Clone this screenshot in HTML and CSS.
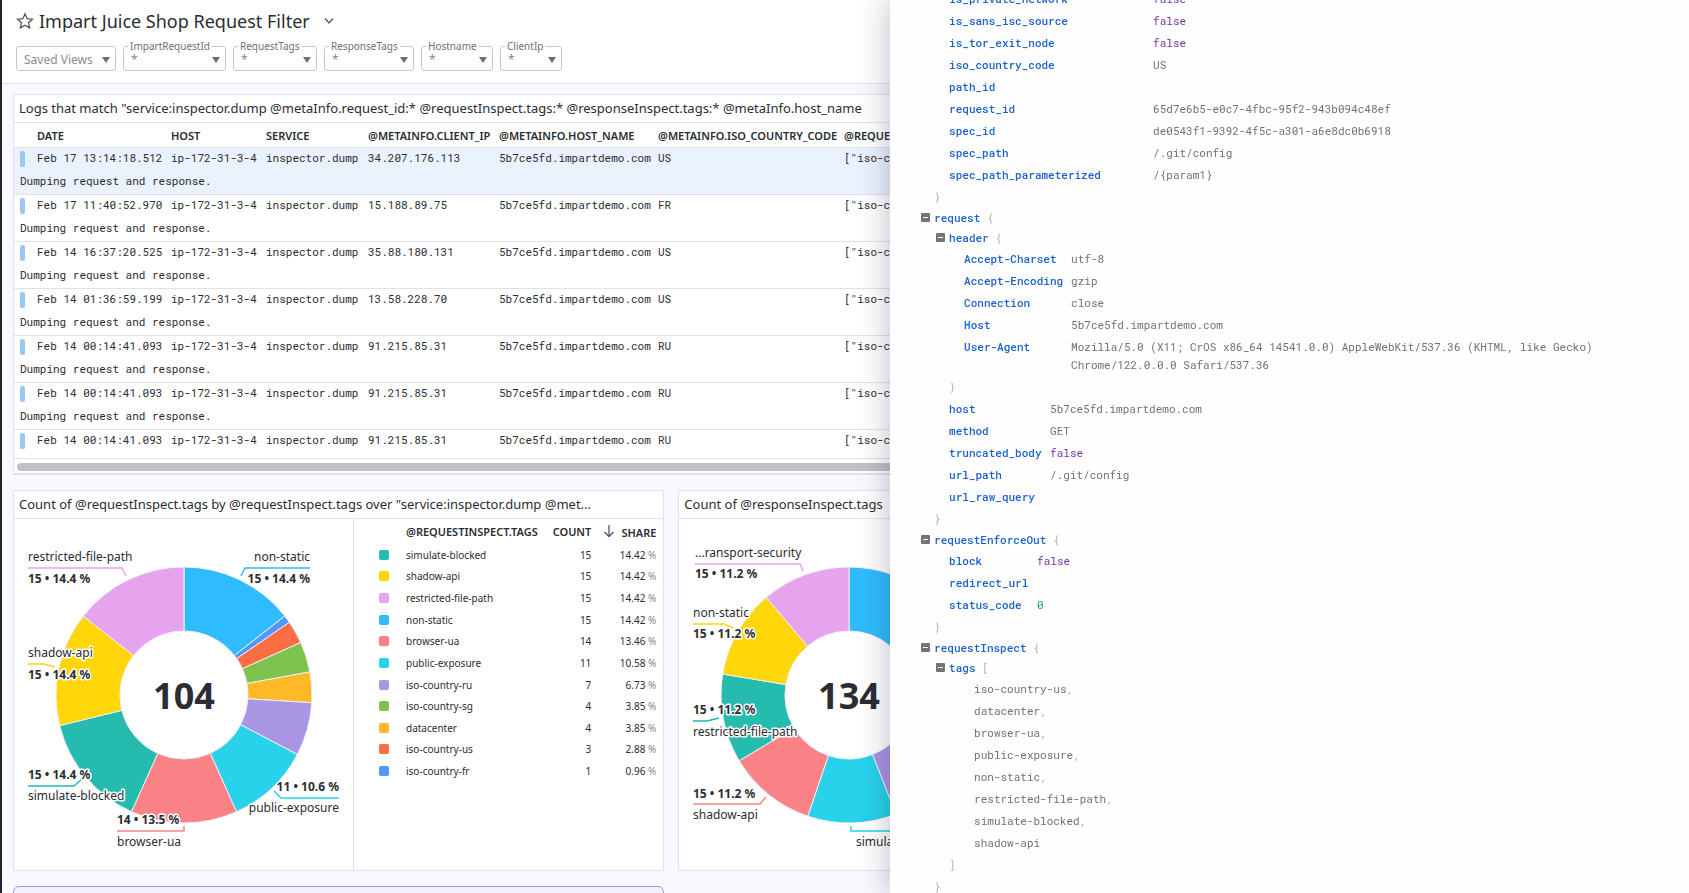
FILE: index.html
```html
<!DOCTYPE html>
<html lang="en">
<head>
  <meta charset="UTF-8">
  <title>Impart Juice Shop Request Filter</title>
  <link rel="stylesheet" href="styles.css">
</head>
<body>
  <div class="dashboard">
    <header class="topbar">
      <div class="title-row">
        <svg class="star" width="18" height="18" viewBox="0 0 18 18"><path d="M9 1.8l2.1 4.9 5.3.5-4 3.5 1.2 5.2L9 13.2l-4.6 2.7 1.2-5.2-4-3.5 5.3-.5z"/></svg>
        <h1>Impart Juice Shop Request Filter</h1>
        <svg class="chevron" width="10" height="8" viewBox="0 0 10 8"><path d="M1 1.5l4 4.5 4-4.5"/></svg>
      </div>
      <div class="filters">
        <div class="filter saved"><select aria-label="Saved Views"><option>Saved Views</option></select></div>
        <div class="filter request-id"><label for="f1">ImpartRequestId</label><select id="f1"><option>*</option></select></div>
        <div class="filter request-tags"><label for="f2">RequestTags</label><select id="f2"><option>*</option></select></div>
        <div class="filter response-tags"><label for="f3">ResponseTags</label><select id="f3"><option>*</option></select></div>
        <div class="filter hostname"><label for="f4">Hostname</label><select id="f4"><option>*</option></select></div>
        <div class="filter client-ip"><label for="f5">ClientIp</label><select id="f5"><option>*</option></select></div>
      </div>
    </header>

    <main class="board">
      <section class="widget logs">
        <h2>Logs that match "service:inspector.dump @metaInfo.request_id:* @requestInspect.tags:* @responseInspect.tags:* @metaInfo.host_name</h2>
        <div class="log-scroll">
          <table class="log-table">
            <colgroup><col class="c-bar"><col class="c-date"><col class="c-host"><col class="c-service"><col class="c-ip"><col class="c-name"><col class="c-iso"><col></colgroup>
            <thead>
              <tr><th></th><th>DATE</th><th>HOST</th><th>SERVICE</th><th>@METAINFO.CLIENT_IP</th><th>@METAINFO.HOST_NAME</th><th>@METAINFO.ISO_COUNTRY_CODE</th><th>@REQUESTINSPECT.TAGS</th></tr>
            </thead>
            <tbody id="logs"></tbody>
          </table>
        </div>
        <div class="scrollbar"><div class="thumb"></div></div>
      </section>

      <section class="widget">
        <h2>Count of @requestInspect.tags by @requestInspect.tags over "service:inspector.dump @met...</h2>
        <div class="pie">
          <svg class="donut" id="donut-request" width="339" height="351" viewBox="0 0 339 351"></svg>
          <div class="legend">
            <table>
              <thead>
                <tr>
                  <th class="swatch-cell"></th><th>@REQUESTINSPECT.TAGS</th><th class="num">COUNT</th>
                  <th class="num"><svg width="12" height="14" viewBox="0 0 12 14"><path d="M6 1v11M1.500 8L6 12.500 10.500 8"/></svg>SHARE</th>
                </tr>
              </thead>
              <tbody id="legend"></tbody>
            </table>
          </div>
        </div>
      </section>

      <section class="widget">
        <h2>Count of @responseInspect.tags</h2>
        <div class="pie">
          <svg class="donut" id="donut-response" width="339" height="351" viewBox="0 0 339 351"></svg>
        </div>
      </section>

      <section class="group"></section>
    </main>
  </div>

  <aside class="drawer">
    <div class="tree">
      <div class="level">
        <dl class="kv meta">
          <dt>is_private_network</dt><dd class="bool">false</dd>
          <dt>is_sans_isc_source</dt><dd class="bool">false</dd>
          <dt>is_tor_exit_node</dt><dd class="bool">false</dd>
          <dt>iso_country_code</dt><dd>US</dd>
          <dt>path_id</dt><dd></dd>
          <dt>request_id</dt><dd>65d7e6b5-e0c7-4fbc-95f2-943b094c48ef</dd>
          <dt>spec_id</dt><dd>de0543f1-9392-4f5c-a301-a6e8dc0b6918</dd>
          <dt>spec_path</dt><dd>/.git/config</dd>
          <dt>spec_path_parameterized</dt><dd>/{param1}</dd>
        </dl>
      </div>
      <div class="close">}</div>

      <div class="head"><button class="toggle" aria-label="Collapse request"></button><span class="key">request</span> {</div>
      <div class="level">
        <div class="head"><button class="toggle" aria-label="Collapse header"></button><span class="key">header</span> {</div>
        <div class="level">
          <dl class="kv header">
            <dt>Accept-Charset</dt><dd>utf-8</dd>
            <dt>Accept-Encoding</dt><dd>gzip</dd>
            <dt>Connection</dt><dd>close</dd>
            <dt>Host</dt><dd>5b7ce5fd.impartdemo.com</dd>
            <dt>User-Agent</dt><dd>Mozilla/5.0 (X11; CrOS x86_64 14541.0.0) AppleWebKit/537.36 (KHTML, like Gecko) Chrome/122.0.0.0 Safari/537.36</dd>
          </dl>
        </div>
        <div class="close">}</div>
        <dl class="kv request">
          <dt>host</dt><dd>5b7ce5fd.impartdemo.com</dd>
          <dt>method</dt><dd>GET</dd>
          <dt>truncated_body</dt><dd class="bool">false</dd>
          <dt>url_path</dt><dd>/.git/config</dd>
          <dt>url_raw_query</dt><dd></dd>
        </dl>
      </div>
      <div class="close">}</div>

      <div class="head"><button class="toggle" aria-label="Collapse requestEnforceOut"></button><span class="key">requestEnforceOut</span> {</div>
      <div class="level">
        <dl class="kv enforce">
          <dt>block</dt><dd class="bool">false</dd>
          <dt>redirect_url</dt><dd></dd>
          <dt>status_code</dt><dd class="number">0</dd>
        </dl>
      </div>
      <div class="close">}</div>

      <div class="head"><button class="toggle" aria-label="Collapse requestInspect"></button><span class="key">requestInspect</span> {</div>
      <div class="level">
        <div class="head"><button class="toggle" aria-label="Collapse tags"></button><span class="key">tags</span> [</div>
        <ul>
          <li>iso-country-us<i>,</i></li>
          <li>datacenter<i>,</i></li>
          <li>browser-ua<i>,</i></li>
          <li>public-exposure<i>,</i></li>
          <li>non-static<i>,</i></li>
          <li>restricted-file-path<i>,</i></li>
          <li>simulate-blocked<i>,</i></li>
          <li>shadow-api</li>
        </ul>
        <div class="close">]</div>
      </div>
      <div class="close">}</div>
    </div>
  </aside>

  <script>
    // Log rows: date, client ip, country
    const logs = [
      ["Feb 17 13:14:18.512", "34.207.176.113", "US"],
      ["Feb 17 11:40:52.970", "15.188.89.75", "FR"],
      ["Feb 14 16:37:20.525", "35.88.180.131", "US"],
      ["Feb 14 01:36:59.199", "13.58.228.70", "US"],
      ["Feb 14 00:14:41.093", "91.215.85.31", "RU"],
      ["Feb 14 00:14:41.093", "91.215.85.31", "RU"],
      ["Feb 14 00:14:41.093", "91.215.85.31", "RU"]
    ];
    document.getElementById("logs").innerHTML = logs.map(([date, ip, country], i) => `
      <tr class="entry${i === 0 ? " active" : ""}">
        <td><span class="bar"></span></td><td>${date}</td><td>ip-172-31-3-4</td><td>inspector.dump</td>
        <td>${ip}</td><td>5b7ce5fd.impartdemo.com</td><td>${country}</td><td>["iso-country-${country.toLowerCase()}"]</td>
      </tr>
      <tr class="message${i === 0 ? " active" : ""}"><td colspan="8">Dumping request and response.</td></tr>`).join("");

    // Legend of the request tags
    const tags = [
      ["simulate-blocked", 15, "14.42", "#25bbae"],
      ["shadow-api", 15, "14.42", "#ffd60a"],
      ["restricted-file-path", 15, "14.42", "#e6a3ee"],
      ["non-static", 15, "14.42", "#2fbcff"],
      ["browser-ua", 14, "13.46", "#fb8388"],
      ["public-exposure", 11, "10.58", "#27d2ea"],
      ["iso-country-ru", 7, "6.73", "#a896e5"],
      ["iso-country-sg", 4, "3.85", "#7fc34f"],
      ["datacenter", 4, "3.85", "#ffb928"],
      ["iso-country-us", 3, "2.88", "#fb6e44"],
      ["iso-country-fr", 1, "0.96", "#5197ff"]
    ];
    document.getElementById("legend").innerHTML = tags.map(([name, count, share, color]) => `
      <tr><td class="swatch-cell"><span class="swatch" style="background:${color}"></span></td>
      <td>${name}</td><td class="num">${count}</td><td class="num">${share} <span class="unit">%</span></td></tr>`).join("");

    // Donut charts, slices run clockwise from the top
    const CX = 170, CY = 176, R = 128, INNER = 64;

    function point(r, turn) {
      const a = turn * 2 * Math.PI;
      return (CX + r * Math.sin(a)).toFixed(2) + " " + (CY - r * Math.cos(a)).toFixed(2);
    }

    function drawDonut(id, total, slices, labels) {
      let sum = 0;
      let svg = "";
      slices.forEach(([count, color]) => {
        const a = sum / total;
        sum += count;
        const b = sum / total;
        svg += `<path class="slice" fill="${color}" d="M${point(R, a)}A${R} ${R} 0 0 1 ${point(R, b)}L${point(INNER, b)}A${INNER} ${INNER} 0 0 0 ${point(INNER, a)}Z"/>`;
      });
      labels.forEach(l => {
        const anchor = l.end ? "end" : "start";
        svg += `<path class="leader" stroke="${l.color}" d="${l.line}"/>`;
        svg += `<text x="${l.x}" y="${l.nameY}" text-anchor="${anchor}">${l.name}</text>`;
        if (l.value) svg += `<text class="value" x="${l.x}" y="${l.valueY}" text-anchor="${anchor}">${l.value}</text>`;
      });
      svg += `<text class="total" x="${CX}" y="190" text-anchor="middle">${total}</text>`;
      document.getElementById(id).innerHTML = svg;
    }

    drawDonut("donut-request", 104, [
      [15, "#2fbcff"], [1, "#5197ff"], [3, "#fb6e44"], [4, "#7fc34f"], [4, "#ffb928"], [7, "#a896e5"],
      [11, "#27d2ea"], [14, "#fb8388"], [15, "#25bbae"], [15, "#ffd60a"], [15, "#e6a3ee"]
    ], [
      { name: "restricted-file-path", value: "15 • 14.4 %", x: 14, nameY: 42, valueY: 64, color: "#e6a3ee", line: "M14 49H108L112 57" },
      { name: "non-static", value: "15 • 14.4 %", x: 296, end: true, nameY: 42, valueY: 64, color: "#2fbcff", line: "M296 49H231L227 57" },
      { name: "shadow-api", value: "15 • 14.4 %", x: 14, nameY: 138, valueY: 160, color: "#ffd60a", line: "M14 145H30L41 148" },
      { name: "simulate-blocked", value: "15 • 14.4 %", x: 14, nameY: 281, valueY: 260, color: "#25bbae", line: "M14 267H60L68 260" },
      { name: "browser-ua", value: "14 • 13.5 %", x: 103, nameY: 327, valueY: 305, color: "#fb8388", line: "M103 312H170V307" },
      { name: "public-exposure", value: "11 • 10.6 %", x: 325, end: true, nameY: 293, valueY: 272, color: "#27d2ea", line: "M325 279H267L260 272" }
    ]);

    drawDonut("donut-response", 134, [
      [15, "#2fbcff"], [4, "#fb6e44"], [11, "#7fc34f"], [14, "#ffb928"], [15, "#a896e5"],
      [15, "#27d2ea"], [15, "#fb8388"], [15, "#25bbae"], [15, "#ffd60a"], [15, "#e6a3ee"]
    ], [
      { name: "...ransport-security", value: "15 • 11.2 %", x: 16, nameY: 38, valueY: 59, color: "#e6a3ee", line: "M16 45H121L124 52" },
      { name: "non-static", value: "15 • 11.2 %", x: 14, nameY: 98, valueY: 119, color: "#ffd60a", line: "M14 105H45L54 109" },
      { name: "restricted-file-path", value: "15 • 11.2 %", x: 14, nameY: 217, valueY: 195, color: "#25bbae", line: "M14 202H28L40 199" },
      { name: "shadow-api", value: "15 • 11.2 %", x: 14, nameY: 300, valueY: 279, color: "#fb8388", line: "M14 285H81L87 278" },
      { name: "simulate-blocked", x: 177, nameY: 327, color: "#27d2ea", line: "M172 307V312H270" }
    ]);
  </script>
</body>
</html>
```

FILE: styles.css
```css
* {
  box-sizing: border-box;
}
body {
  margin: 0;
  height: 100vh;
  overflow: hidden;
  font-family: "Noto Sans", sans-serif;
  font-size: 12px;
  color: #2a2d33;
  background: #f9f8fe;
}
h1, h2, dl, dd, ul {
  margin: 0;
  padding: 0;
  font-weight: 400;
}
.dashboard {
  height: 100vh;
  overflow: hidden;
  border-left: 2px solid #22212f;
}

/* top bar */
.topbar {
  height: 84px;
  padding: 8px 14px 0;
  background: #fff;
  border-bottom: 1px solid #e1e2ee;
}
.title-row {
  display: flex;
  align-items: center;
  height: 26px;
}
.title-row h1 {
  margin: 0 14px 0 5px;
  font-size: 18px;
  line-height: 26px;
}
.star, .chevron, .legend svg {
  fill: none;
  stroke: #55575d;
  stroke-width: 1.3;
}
.filters {
  display: flex;
  gap: 7px;
  padding-top: 12px;
}
.filter {
  position: relative;
  height: 25px;
  border: 1px solid #bcc5e6;
  border-radius: 3px;
}
.filter::after {
  content: "";
  position: absolute;
  right: 5px;
  top: 10px;
  border: 4px solid transparent;
  border-top: 6px solid #6c6d72;
  border-bottom: 0;
  pointer-events: none;
}
.filter label {
  position: absolute;
  left: 4px;
  top: -8px;
  padding: 0 2px;
  background: #fff;
  color: #6e7076;
  font-size: 10px;
  line-height: 14px;
}
.filter select {
  appearance: none;
  width: 100%;
  height: 23px;
  padding: 2px 7px 0;
  border: 0;
  background: none;
  color: #898b91;
  font-family: inherit;
  font-size: 12px;
}
.saved { width: 100px; }
.request-id { width: 103px; }
.request-tags { width: 84px; }
.response-tags { width: 90px; }
.hostname { width: 72px; }
.client-ip { width: 62px; }

/* widgets */
.board {
  display: grid;
  grid-template-columns: 79fr 121fr;
  gap: 15px 14px;
  padding: 10px 13px 0 11px;
}
.widget {
  min-width: 0;
  background: #fff;
  border: 1px solid #dfe2f0;
}
.widget h2 {
  height: 28px;
  padding-left: 5px;
  border-bottom: 1px solid #dfe2f0;
  font-size: 13px;
  line-height: 27px;
  white-space: nowrap;
  overflow: hidden;
}
.logs {
  grid-column: 1 / -1;
  height: 381px;
  border-bottom-width: 2px;
}
.log-scroll {
  height: 336px;
  overflow: hidden;
  border-bottom: 1px solid #dfe2f0;
}
.log-table {
  width: 100%;
  table-layout: fixed;
  border-collapse: collapse;
  white-space: nowrap;
}
.c-bar { width: 23px; }
.c-date { width: 134px; }
.c-host { width: 95px; }
.c-service { width: 102px; }
.c-ip { width: 131px; }
.c-name { width: 159px; }
.c-iso { width: 186px; }
.log-table th {
  height: 24px;
  padding: 2px 0 0;
  font-size: 11px;
  font-weight: 600;
  text-align: left;
}
.log-table td {
  padding: 0 0 3px;
  font-family: "Roboto Mono", "Liberation Mono", monospace;
  font-size: 11px;
}
.entry td {
  height: 24px;
  border-top: 1px solid #dfe2ee;
}
.message td {
  height: 23px;
  padding-left: 6px;
}
.active td {
  background: #eaf2fe;
}
.bar {
  display: block;
  width: 5px;
  height: 16px;
  margin: 2px 0 0 6px;
  border-radius: 2px;
  background: #9bc8ee;
}
.scrollbar {
  padding: 4px 3px;
}
.thumb {
  height: 8px;
  border-radius: 4px;
  background: #c1c1c3;
}

/* donut and legend */
.pie {
  display: flex;
  height: 351px;
}
.donut {
  flex: none;
}
.slice {
  stroke: #f4eff5;
  stroke-width: 1;
}
.leader {
  fill: none;
  stroke-width: 1.5;
}
.donut text {
  font-size: 12px;
  fill: #2a2d33;
  stroke: #fff;
  stroke-width: 3;
  stroke-linejoin: round;
  paint-order: stroke;
}
.donut .value {
  font-weight: 700;
}
.donut .total {
  font-size: 36px;
  font-weight: 700;
}
.legend {
  flex: 1;
  padding: 0 7px 0 25px;
  border-left: 1px solid #dfe2f0;
}
.legend table {
  width: 100%;
  height: 263px;
  table-layout: fixed;
  border-collapse: collapse;
  font-size: 10px;
}
.legend th, .legend td {
  padding: 0;
  text-align: left;
  white-space: nowrap;
}
.legend th {
  height: 25px;
  font-size: 11px;
  font-weight: 600;
}
.legend .num {
  width: 65px;
  text-align: right;
}
.legend .swatch-cell {
  width: 27px;
}
.legend svg {
  margin-right: 6px;
  vertical-align: -1px;
}
.swatch {
  display: block;
  width: 10px;
  height: 10px;
  border-radius: 2px;
}
.unit {
  color: #85878c;
}
.group {
  height: 60px;
  border: 1px solid #ab8bf5;
  border-radius: 6px;
  background: #f4f0fe;
}

/* side panel over the board */
.drawer {
  position: fixed;
  top: 0;
  right: 0;
  bottom: 0;
  left: 52.7%;
  overflow: hidden;
  background: #fefefe;
  box-shadow: 0 0 30px rgba(30, 25, 60, 0.3);
  font-family: "Roboto Mono", "Liberation Mono", monospace;
  font-size: 11px;
  color: #b0b1b5;
}
.tree {
  margin-top: -12px;
  padding: 0 44px;
}
.level {
  padding-left: 15px;
}
.head {
  position: relative;
  line-height: 20px;
}
.toggle {
  position: absolute;
  left: -13px;
  top: 5px;
  width: 9px;
  height: 9px;
  padding: 0;
  border: 3px solid #737479;
  border-width: 4px 2px;
  border-radius: 1px;
  background: #fff;
}
.close {
  line-height: 22px;
}
.kv {
  display: grid;
}
.meta { grid-template-columns: 204px 1fr; }
.header { grid-template-columns: 107px 1fr; }
.request { grid-template-columns: 101px 1fr; }
.enforce { grid-template-columns: 88px 1fr; }
.kv dt, .kv dd {
  padding: 2px 0;
  line-height: 18px;
}
.key, .kv dt {
  color: #1c62cf;
  font-weight: 500;
}
.kv dd, .tree li {
  color: #717277;
}
.kv .bool {
  color: #7038a8;
}
.kv .number {
  color: #1fa548;
}
.tree ul {
  padding-left: 25px;
  list-style: none;
}
.tree li {
  line-height: 22px;
}
.tree i {
  font-style: normal;
  color: #b0b1b5;
}
```
